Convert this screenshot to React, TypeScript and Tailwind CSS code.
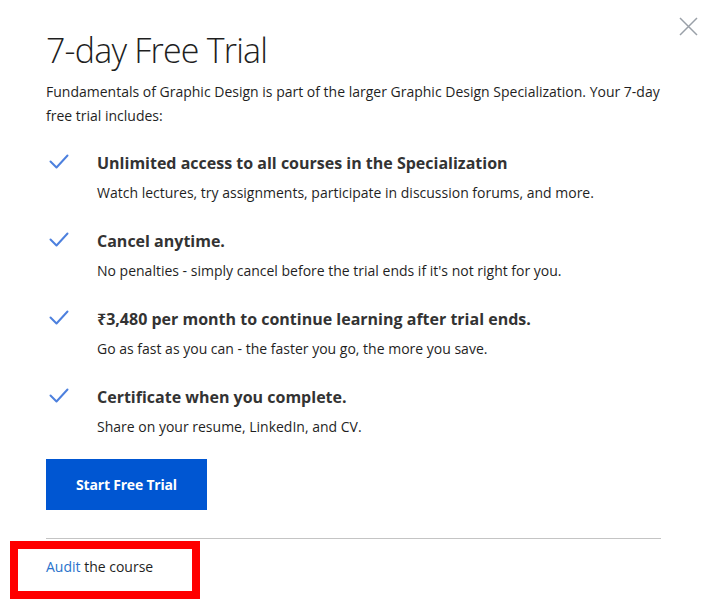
import React from 'react';

const features = [
  {
    title: 'Unlimited access to all courses in the Specialization',
    body: 'Watch lectures, try assignments, participate in discussion forums, and more.',
  },
  {
    title: 'Cancel anytime.',
    body: "No penalties - simply cancel before the trial ends if it's not right for you.",
  },
  {
    title: '₹3,480 per month to continue learning after trial ends.',
    body: 'Go as fast as you can - the faster you go, the more you save.',
  },
  {
    title: 'Certificate when you complete.',
    body: 'Share on your resume, LinkedIn, and CV.',
  },
];

const Check = () => (
  <svg width="20" height="16" viewBox="0 0 20 16" fill="none" className="mt-[3px] ml-[3px]">
    <path d="M1.5 7.5 L7.5 13.5 L18.5 1.5" stroke="#4d80de" strokeWidth="2" strokeLinecap="round" strokeLinejoin="round" />
  </svg>
);

export default function App() {
  return (
    <div
      className="relative w-[713px] h-[616px] bg-white text-[#1f1f1f]"
      style={{ fontFamily: '"Open Sans", "Noto Sans", sans-serif' }}
    >
      <button className="absolute left-[678px] top-[16px] w-[22px] h-[22px]" aria-label="Close">
        <svg width="22" height="22" viewBox="0 0 22 22">
          <path d="M2 2 L19 19 M19 2 L2 19" stroke="#9aa0a8" strokeWidth="1.5" />
        </svg>
      </button>

      <div className="pl-[46px] pr-[52px] pt-[28px]">
        <h1 className="text-[34px] font-light leading-[44px] tracking-[-0.8px] text-[#1f1f1f]">7-day Free Trial</h1>
        <p className="mt-[8px] text-[14px] leading-6">
          Fundamentals of Graphic Design is part of the larger Graphic Design Specialization. Your 7-day free trial
          includes:
        </p>

        <ul className="mt-[23px] flex flex-col gap-6">
          {features.map((f) => (
            <li key={f.title} className="flex">
              <div className="w-[51px] shrink-0">
                <Check />
              </div>
              <div>
                <div className="text-[16px] font-bold leading-6 text-[#333]">{f.title}</div>
                <div className="mt-[6px] text-[14px] leading-6">{f.body}</div>
              </div>
            </li>
          ))}
        </ul>

        <button className="mt-[20px] w-[161px] h-[51px] bg-[#0056d2] text-white text-[14px] font-bold tracking-[-0.2px]">
          Start Free Trial
        </button>

        <div className="mt-[28px] border-t border-[#c4c4c4]" />

        <div className="mt-[16px] text-[14px] leading-6">
          <span className="text-[#2a73cc]">Audit</span> the course
        </div>
      </div>

      <div className="absolute left-[10px] top-[541px] w-[190px] h-[58px] border-[8px] border-[#ff0000] pointer-events-none" />
    </div>
  );
}
